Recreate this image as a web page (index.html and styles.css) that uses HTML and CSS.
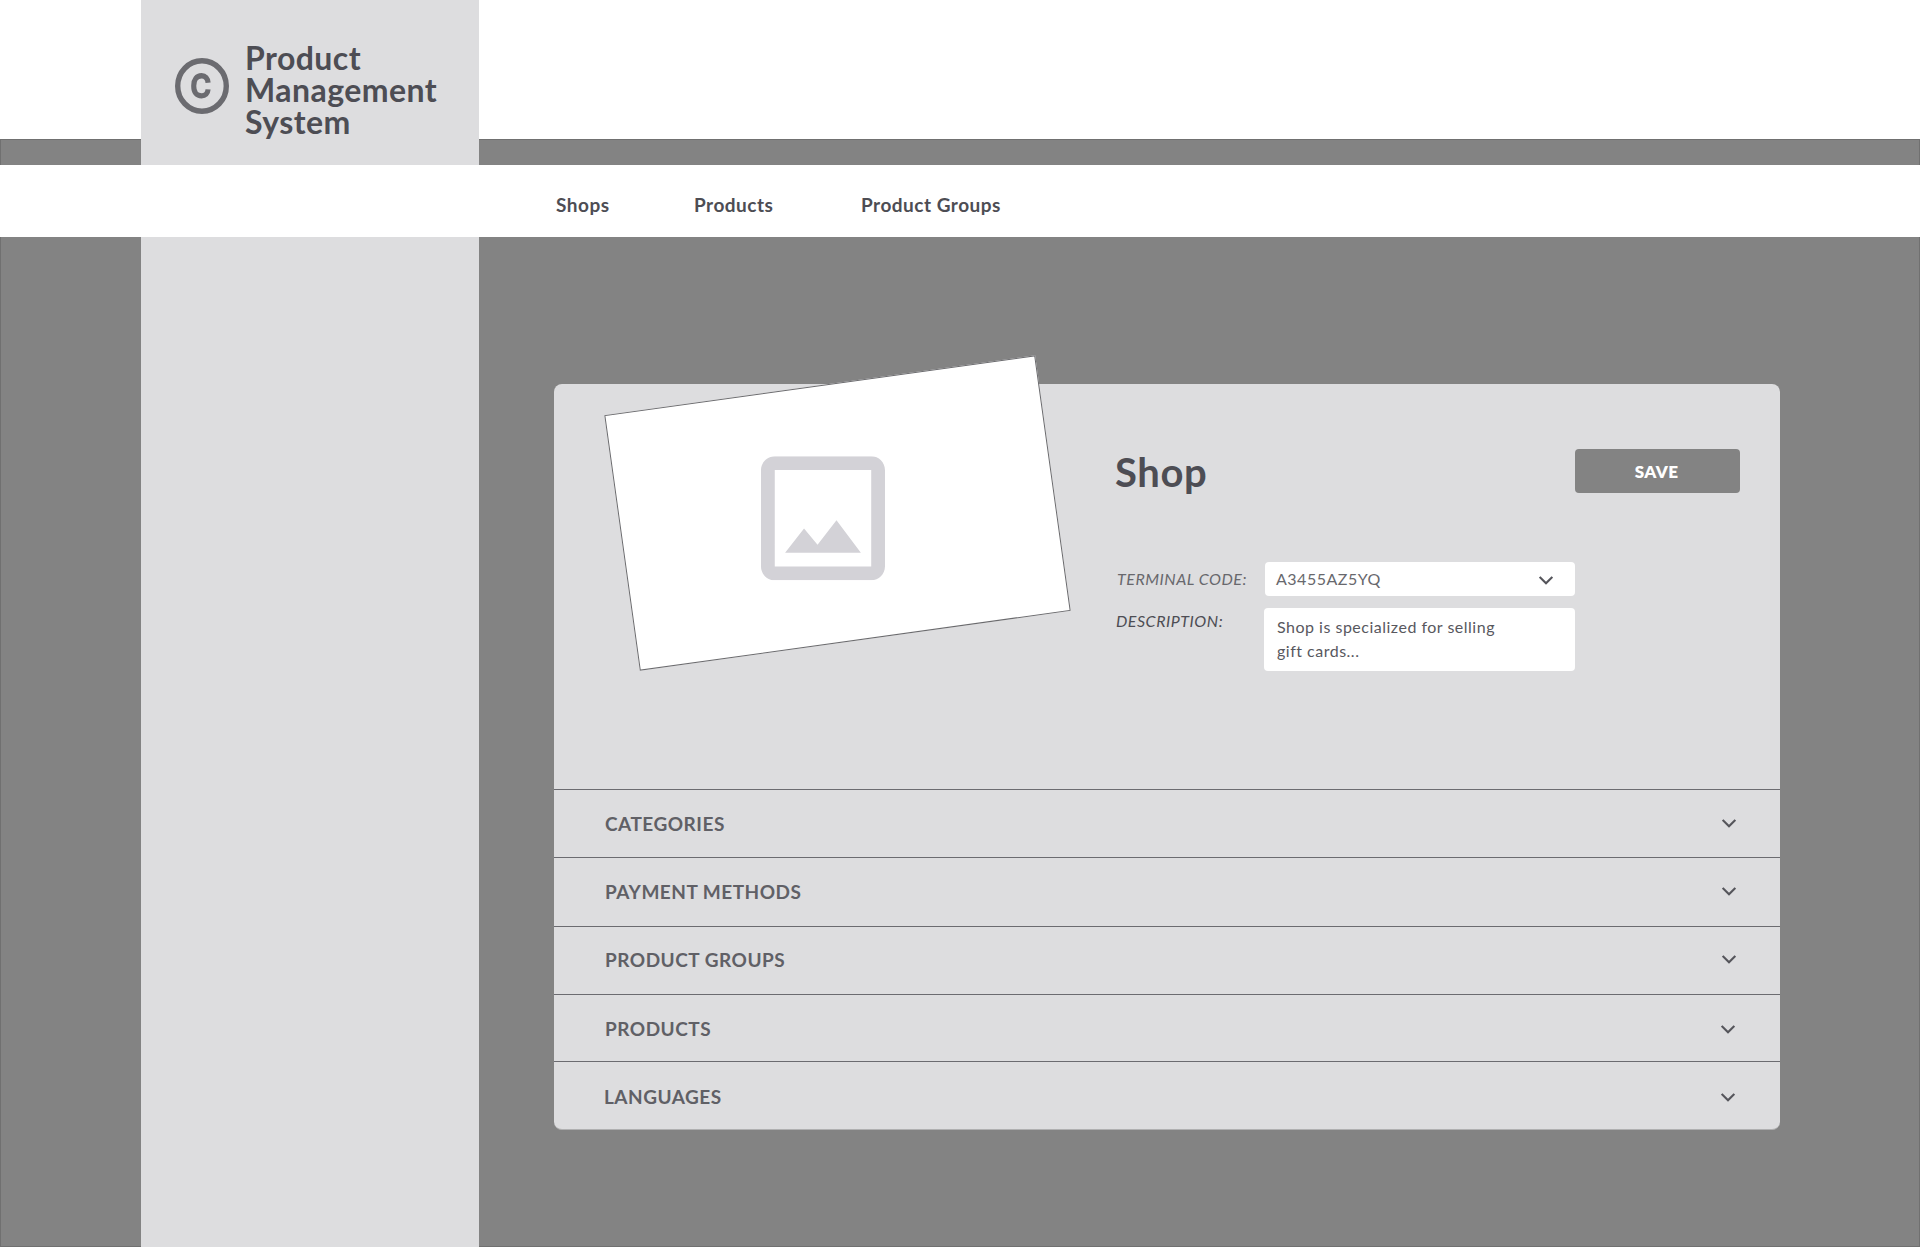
FILE: index.html
```html
<!DOCTYPE html>
<html lang="en">
<head>
<meta charset="utf-8">
<title>Product Management System</title>
<link rel="stylesheet" href="styles.css">
</head>
<body>
<svg class="defs" width="0" height="0" aria-hidden="true">
  <symbol id="chevron" viewBox="0 0 14 9"><path d="M0.7 0.9 7 7.2 13.3 0.9" fill="none" stroke="currentColor" stroke-width="2.1"/></symbol>
</svg>
<div class="page">
  <header class="top">
    <div class="brand">
      <svg class="brand-icon" viewBox="2 2 20 20" preserveAspectRatio="none">
        <circle cx="12" cy="12" r="9" fill="none" stroke="currentColor" stroke-width="2"/>
        <path d="M14.25 10.85C14.15 9.3 13.2 8.35 11.85 8.35 10 8.35 8.95 9.7 8.95 11.8v.35c0 2.1 1.05 3.35 2.9 3.35 1.35 0 2.3-.85 2.4-2.3" fill="none" stroke="currentColor" stroke-width="1.9"/>
      </svg>
      <h1 class="brand-name">Product<br>Management<br>System</h1>
    </div>
  </header>
  <nav class="nav">
    <a class="nav-link">Shops</a>
    <a class="nav-link">Products</a>
    <a class="nav-link">Product Groups</a>
  </nav>
  <div class="body">
    <aside class="sidebar"></aside>
    <main class="main">
      <section class="card">
        <div class="details">
          <div class="photo">
            <svg class="photo-icon" viewBox="3 3 18 18"><path fill="currentColor" d="M19 5v14H5V5h14m0-2H5c-1.1 0-2 .9-2 2v14c0 1.1.9 2 2 2h14c1.1 0 2-.9 2-2V5c0-1.1-.9-2-2-2zm-5.04 9.29l-2.75 3.54-1.96-2.36L6.5 17h11l-3.54-4.71z"/></svg>
          </div>
          <div class="form">
            <div class="form-head">
              <h2 class="title">Shop</h2>
              <button class="save">SAVE</button>
            </div>
            <div class="field">
              <span class="label">TERMINAL CODE:</span>
              <div class="select"><span>A3455AZ5YQ</span><svg class="chevron"><use href="#chevron"/></svg></div>
            </div>
            <div class="field">
              <span class="label label-strong">DESCRIPTION:</span>
              <div class="textarea">Shop is specialized for selling<br>gift cards...</div>
            </div>
          </div>
        </div>
        <div class="row"><span>CATEGORIES</span><svg class="chevron"><use href="#chevron"/></svg></div>
        <div class="row row-high"><span>PAYMENT METHODS</span><svg class="chevron"><use href="#chevron"/></svg></div>
        <div class="row row-mid"><span>PRODUCT GROUPS</span><svg class="chevron"><use href="#chevron"/></svg></div>
        <div class="row row-low"><span>PRODUCTS</span><svg class="chevron"><use href="#chevron"/></svg></div>
        <div class="row row-last"><span>LANGUAGES</span><svg class="chevron"><use href="#chevron"/></svg></div>
      </section>
    </main>
  </div>
</div>
</body>
</html>
```
FILE: styles.css
```css
* { box-sizing: border-box; }
body { margin: 0; background: #fff; font-family: Lato, sans-serif; color: #4d4d54; }
h1, h2 { margin: 0; }
.defs { display: block; }
.page { height: 1247px; display: flex; flex-direction: column; overflow: hidden; }

.top {
  height: 165px;
  padding-left: 140px;
  border: solid #707070;
  border-width: 0 1px;
  border-image: linear-gradient(#fff 139px, #707070 139px) 0 1;
  background: linear-gradient(#fff 139px, #707070 139px, #707070 140px, #838383 140px);
}
.brand {
  width: 338px; height: 165px;
  padding: 42px 0 0 34px;
  display: flex; gap: 16px;
  background: #dddddf;
}
.brand-icon { width: 54px; height: 56px; margin-top: 16px; color: #6b6b70; }
.brand-name { font-size: 32px; line-height: 32px; font-weight: 700; letter-spacing: 0.45px; }

.nav { height: 72px; padding: 27px 0 0 556px; display: flex; background: #fff; }
.nav-link { font-size: 19px; line-height: 26px; font-weight: 700; letter-spacing: 0.5px; }
.nav-link:nth-child(1) { width: 138px; }
.nav-link:nth-child(2) { width: 167px; }

.body {
  flex: 1;
  display: flex;
  padding-left: 140px;
  background: #838383;
  border: solid #707070;
  border-width: 0 1px 1px;
}
.sidebar { width: 338px; margin-bottom: -1px; background: #dddddf; }
.main { padding: 147px 0 0 75px; }
.card { width: 1226px; height: 746px; border-radius: 8px; background: #dddddf; border-bottom: 1px solid #b0b0b1; }
.details { height: 405px; padding-left: 66px; display: flex; }
.photo {
  width: 435px; height: 258px;
  display: flex; align-items: center; justify-content: center;
  background: #fff;
  border: 1px solid #6b6b6e;
  transform: rotate(-7.92deg);
}
.photo-icon { width: 124px; height: 124px; transform: translate(-15.6px, 3.2px) rotate(7.92deg); color: #d3d2d7; }
.form { width: 625px; margin-left: 60px; padding-top: 65px; }
.form-head { display: flex; justify-content: space-between; height: 113px; }
.title { font-size: 40px; line-height: 46px; letter-spacing: 0.6px; }
.save {
  width: 165px; height: 44px;
  padding: 1px 2px 0 0;
  border: 0; border-radius: 4px;
  background: #838383; color: #fff;
  font: 800 17px/43px Lato, sans-serif;
  letter-spacing: 0.4px;
}
.field { display: flex; margin-bottom: 12px; }
.label { width: 150px; padding-left: 2px; font-size: 16px; line-height: 34px; font-style: italic; letter-spacing: 0.52px; color: #68686d; white-space: nowrap; }
.label-strong { width: 149px; padding-left: 1px; line-height: 26px; color: #4d4d54; }
.select {
  width: 310px; height: 34px;
  padding: 0 22px 0 11px;
  display: flex; align-items: center; justify-content: space-between;
  border-radius: 4px; background: #fff;
  font-size: 16px; line-height: 18px; letter-spacing: 0.5px; color: #68686d;
}
.select span { padding-bottom: 1px; }
.select .chevron { margin-top: 3px; }
.textarea {
  width: 311px; height: 63px;
  padding: 7px 13px;
  border-radius: 4px; background: #fff;
  font-size: 16px; line-height: 24px; letter-spacing: 0.5px;
  color: #58585e;
}
.chevron { width: 14px; height: 9px; color: #55555b; }
.row {
  height: 68px;
  padding: 0 44px 0 51px;
  display: flex; align-items: center; justify-content: space-between;
  border-top: 1px solid #6b6b70;
  font-size: 19px; line-height: 24px; font-weight: 700; letter-spacing: 0.5px; color: #606066;
}
.row-high { height: 69px; padding-bottom: 1px; }
.row-mid { padding-bottom: 2px; }
.row-low { height: 67px; padding: 2px 45px 0 51px; }
.row-last { padding: 3px 45px 0 50px; }
```
